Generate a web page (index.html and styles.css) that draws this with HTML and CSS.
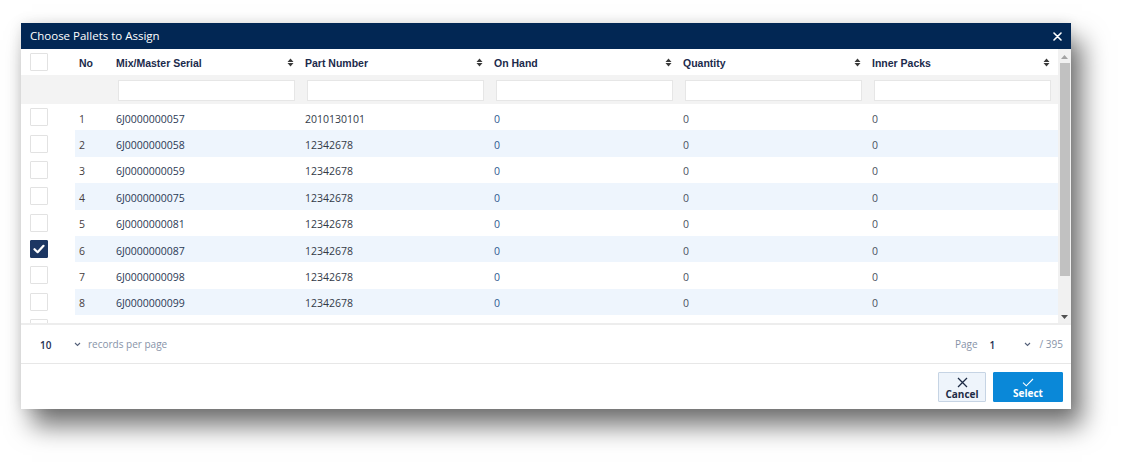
FILE: index.html
```html
<!DOCTYPE html>
<html>
<head>
<meta charset="utf-8">
<link rel="stylesheet" href="styles.css">
</head>
<body>
<div class="modal">
  <div class="titlebar">
    <span class="title">Choose Pallets to Assign</span>
    <svg class="close" width="9" height="9" viewBox="0 0 9 9"><path d="M1 1L8 8M8 1L1 8" stroke="#fff" stroke-width="1.6" stroke-linecap="round"/></svg>
  </div>
  <div class="grid">
    <div class="grid-main">
      <div class="row head">
        <div class="c cb"><span class="box"></span></div>
        <div class="c no">No</div>
        <div class="c col"><span>Mix/Master Serial</span><svg class="sort" width="7" height="9" viewBox="0 0 7 9"><path d="M0.5 4L3.5 0.5L6.5 4Z M0.5 5L3.5 8.5L6.5 5Z" fill="#3a3a3a"/></svg></div>
        <div class="c col"><span>Part Number</span><svg class="sort" width="7" height="9" viewBox="0 0 7 9"><path d="M0.5 4L3.5 0.5L6.5 4Z M0.5 5L3.5 8.5L6.5 5Z" fill="#3a3a3a"/></svg></div>
        <div class="c col"><span>On Hand</span><svg class="sort" width="7" height="9" viewBox="0 0 7 9"><path d="M0.5 4L3.5 0.5L6.5 4Z M0.5 5L3.5 8.5L6.5 5Z" fill="#3a3a3a"/></svg></div>
        <div class="c col"><span>Quantity</span><svg class="sort" width="7" height="9" viewBox="0 0 7 9"><path d="M0.5 4L3.5 0.5L6.5 4Z M0.5 5L3.5 8.5L6.5 5Z" fill="#3a3a3a"/></svg></div>
        <div class="c col"><span>Inner Packs</span><svg class="sort" width="7" height="9" viewBox="0 0 7 9"><path d="M0.5 4L3.5 0.5L6.5 4Z M0.5 5L3.5 8.5L6.5 5Z" fill="#3a3a3a"/></svg></div>
      </div>
      <div class="row filter">
        <div class="c cb"></div>
        <div class="c no"></div>
        <div class="c col"><span class="input"></span></div>
        <div class="c col"><span class="input"></span></div>
        <div class="c col"><span class="input"></span></div>
        <div class="c col"><span class="input"></span></div>
        <div class="c col"><span class="input"></span></div>
      </div>
      <div class="row data">
        <div class="c cb"><span class="box"></span></div>
        <div class="c no">1</div><div class="c col serial">6J0000000057</div><div class="c col part">2010130101</div><div class="c col onhand">0</div><div class="c col num">0</div><div class="c col num">0</div>
      </div>
      <div class="row data alt">
        <div class="c cb"><span class="box"></span></div>
        <div class="c no">2</div><div class="c col serial">6J0000000058</div><div class="c col part">12342678</div><div class="c col onhand">0</div><div class="c col num">0</div><div class="c col num">0</div>
      </div>
      <div class="row data">
        <div class="c cb"><span class="box"></span></div>
        <div class="c no">3</div><div class="c col serial">6J0000000059</div><div class="c col part">12342678</div><div class="c col onhand">0</div><div class="c col num">0</div><div class="c col num">0</div>
      </div>
      <div class="row data alt">
        <div class="c cb"><span class="box"></span></div>
        <div class="c no">4</div><div class="c col serial">6J0000000075</div><div class="c col part">12342678</div><div class="c col onhand">0</div><div class="c col num">0</div><div class="c col num">0</div>
      </div>
      <div class="row data">
        <div class="c cb"><span class="box"></span></div>
        <div class="c no">5</div><div class="c col serial">6J0000000081</div><div class="c col part">12342678</div><div class="c col onhand">0</div><div class="c col num">0</div><div class="c col num">0</div>
      </div>
      <div class="row data alt">
        <div class="c cb"><span class="box checked"><svg width="12" height="10" viewBox="0 0 12 10"><path d="M1.5 5.2L4.6 8.2L10.5 1.8" fill="none" stroke="#fff" stroke-width="2.2" stroke-linecap="round" stroke-linejoin="round"/></svg></span></div>
        <div class="c no">6</div><div class="c col serial">6J0000000087</div><div class="c col part">12342678</div><div class="c col onhand">0</div><div class="c col num">0</div><div class="c col num">0</div>
      </div>
      <div class="row data">
        <div class="c cb"><span class="box"></span></div>
        <div class="c no">7</div><div class="c col serial">6J0000000098</div><div class="c col part">12342678</div><div class="c col onhand">0</div><div class="c col num">0</div><div class="c col num">0</div>
      </div>
      <div class="row data alt">
        <div class="c cb"><span class="box"></span></div>
        <div class="c no">8</div><div class="c col serial">6J0000000099</div><div class="c col part">12342678</div><div class="c col onhand">0</div><div class="c col num">0</div><div class="c col num">0</div>
      </div>
      <div class="row data">
        <div class="c cb"><span class="box"></span></div>
        <div class="c no"></div><div class="c col"></div><div class="c col"></div><div class="c col"></div><div class="c col"></div><div class="c col"></div>
      </div>
    </div>
    <div class="scrollbar">
      <div class="sb-btn"><svg width="7" height="4" viewBox="0 0 7 4"><path d="M0 4L3.5 0L7 4Z" fill="#a3a3a3"/></svg></div>
      <div class="sb-track"><div class="sb-thumb"></div></div>
      <div class="sb-btn"><svg width="7" height="4" viewBox="0 0 7 4"><path d="M0 0L3.5 4L7 0Z" fill="#505050"/></svg></div>
    </div>
  </div>
  <div class="pager">
    <div class="pp">
      <span class="sel-val">10</span>
      <svg class="chev" width="7" height="5" viewBox="0 0 7 5"><path d="M1 1L3.5 3.5L6 1" fill="none" stroke="#55617a" stroke-width="1.1"/></svg>
      <span class="muted">records per page</span>
    </div>
    <div class="pg">
      <span class="muted">Page</span>
      <span class="sel-val page-val">1</span>
      <svg class="chev" width="7" height="5" viewBox="0 0 7 5"><path d="M1 1L3.5 3.5L6 1" fill="none" stroke="#55617a" stroke-width="1.1"/></svg>
      <span class="muted total">/ 395</span>
    </div>
  </div>
  <div class="footer">
    <button class="btn cancel">
      <svg width="11" height="11" viewBox="0 0 11 11"><path d="M1 1L10 10M10 1L1 10" stroke="#1d2b45" stroke-width="1.3"/></svg>
      <span>Cancel</span>
    </button>
    <button class="btn select">
      <svg width="12" height="9" viewBox="0 0 12 9"><path d="M1 4.6L4.3 7.8L11 1" fill="none" stroke="#fff" stroke-width="1.1"/></svg>
      <span>Select</span>
    </button>
  </div>
</div>
</body>
</html>
```
FILE: styles.css
```css
html, body {
  margin: 0;
  padding: 0;
  background: #ffffff;
}
body {
  height: 464px;
  box-sizing: border-box;
  overflow: hidden;
  padding: 23px 0 0 21px;
  font-family: "Open Sans", "Noto Sans", sans-serif;
}
.modal {
  width: 1050px;
  background: #fff;
  box-shadow: 11px 17px 24px rgba(0, 0, 0, 0.55), 0 0 12px rgba(0, 0, 0, 0.1);
}
.titlebar {
  height: 26px;
  background: #022754;
  display: flex;
  align-items: center;
  justify-content: space-between;
  padding: 0 9px 0 9px;
  box-sizing: border-box;
}
.title {
  color: #fff;
  font-size: 11.5px;
  line-height: 26px;
}
.close {
  display: block;
}
.grid {
  display: flex;
  height: 276px;
  border-bottom: 2px solid #ededed;
  box-sizing: border-box;
}
.grid-main {
  width: 1037px;
  overflow: hidden;
}
.row {
  display: flex;
  align-items: stretch;
}
.c {
  box-sizing: border-box;
  display: flex;
  align-items: center;
}
.cb {
  width: 54px;
  padding-left: 9px;
  background: #fff;
}
.no {
  width: 38px;
  padding-left: 4px;
}
.col {
  width: 189px;
  padding-left: 3px;
}
.box {
  width: 18px;
  height: 18px;
  box-sizing: border-box;
  border: 1px solid #e2e2e2;
  border-radius: 1px;
  background: #fff;
  display: flex;
  align-items: center;
  justify-content: center;
}
.box.checked {
  background: #1c3763;
  border-color: #1c3763;
}
.head {
  height: 26px;
  font-family: "Liberation Sans", Arial, sans-serif;
  font-weight: bold;
  font-size: 10.5px;
  color: #1b2a4b;
}
.head .col {
  justify-content: space-between;
  padding-right: 8px;
  padding-top: 2px;
}
.head .no {
  padding-top: 2px;
}
.sort {
  display: block;
  margin-top: -2px;
}
.filter {
  height: 29px;
  background: #f3f3f3;
}
.filter .cb {
  background: #f3f3f3;
}
.filter .col {
  padding-left: 5px;
  padding-right: 7px;
}
.input {
  display: block;
  width: 100%;
  height: 21px;
  box-sizing: border-box;
  background: #fff;
  border: 1px solid #e6e6e6;
  margin-top: 1px;
}
.data {
  height: 26.375px;
  font-size: 10.5px;
  color: #343d4c;
}
.data .no,
.data .col {
  padding-top: 3px;
}
.data.alt .no,
.data.alt .col {
  background: #eef5fd;
}
.data .no {
  color: #463d40;
}
.serial {
  color: #2b3a55;
}
.part {
  color: #333a47;
}
.onhand {
  color: #2f5a91;
}
.num {
  color: #4a5160;
}
.scrollbar {
  width: 13px;
  background: #f1f1f1;
  display: flex;
  flex-direction: column;
  padding-top: 1px;
  box-sizing: border-box;
}
.sb-btn {
  height: 13px;
  display: flex;
  align-items: center;
  justify-content: center;
}
.sb-btn svg {
  display: block;
}
.sb-track {
  flex: 1;
  padding: 0 1px 0 2px;
}
.sb-thumb {
  height: 213px;
  background: #c1c1c1;
}
.pager {
  height: 38px;
  border-bottom: 1px solid #e7e7e7;
  display: flex;
  align-items: center;
  justify-content: space-between;
  padding: 0 8px 0 19px;
  font-size: 10px;
}
.pp, .pg {
  display: flex;
  align-items: center;
}
.sel-val {
  color: #1e2f52;
  font-weight: 600;
  width: 34px;
  padding-top: 1px;
}
.page-val {
  width: 34px;
}
.chev {
  display: block;
  margin-right: 7px;
}
.pg .chev {
  margin-right: 9px;
}
.muted {
  color: #8793a8;
}
.pg .muted:first-child {
  margin-right: 12px;
}
.footer {
  height: 45px;
  display: flex;
  justify-content: flex-end;
  align-items: flex-start;
  gap: 7px;
  padding: 8px 8px 0 0;
  box-sizing: border-box;
}
.btn {
  height: 30px;
  margin: 0;
  padding: 2px 0 0 0;
  box-sizing: border-box;
  display: flex;
  flex-direction: column;
  align-items: center;
  justify-content: center;
  font-family: "Open Sans", "Noto Sans", sans-serif;
  font-weight: bold;
  font-size: 10px;
  line-height: 12px;
  border-radius: 1px;
}
.btn svg {
  display: block;
}
.cancel {
  width: 48px;
  background: #eef4fb;
  border: 1px solid #c6d4e4;
  color: #1d2b45;
}
.select {
  width: 70px;
  background: #0a88d8;
  border: 1px solid #0a88d8;
  color: #fff;
}
```
